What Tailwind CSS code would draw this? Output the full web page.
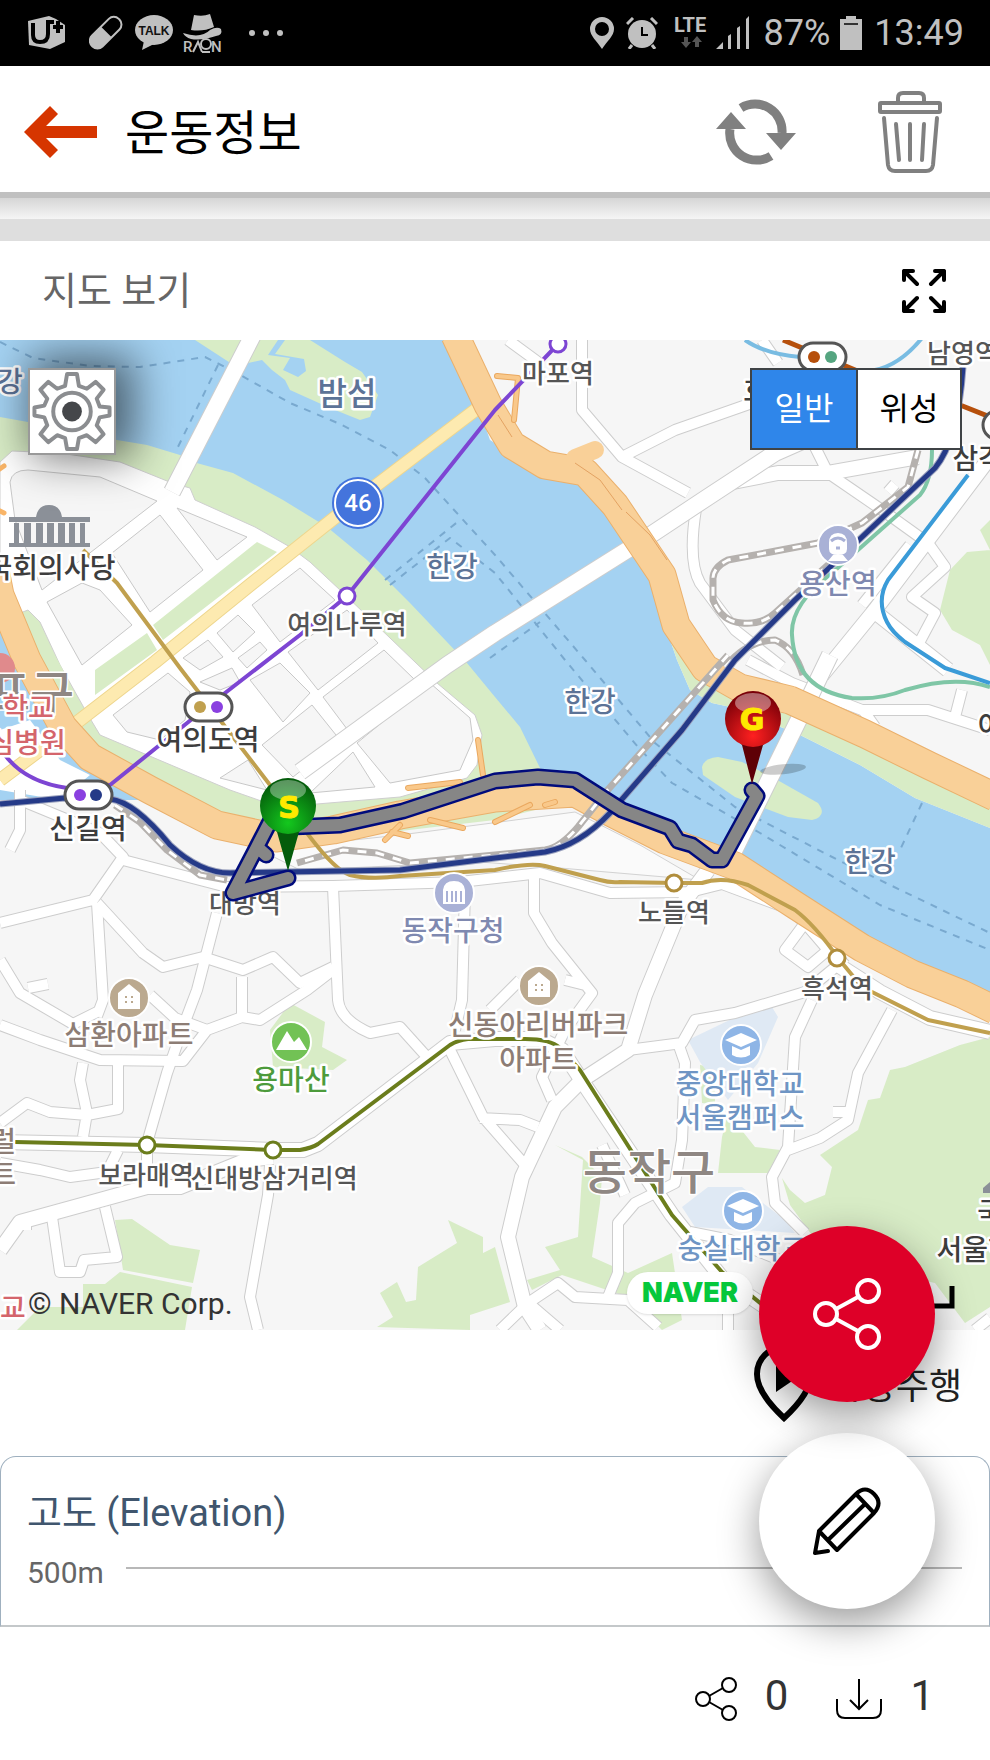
<!DOCTYPE html>
<html lang="ko">
<head>
    <meta charset="UTF-8">
    <meta name="viewport" content="width=device-width, initial-scale=1.0">
    <title>운동정보</title>
    <script src="https://cdn.jsdelivr.net/npm/@tailwindcss/browser@4"></script>
</head>
<body class="bg-white font-[family-name:Roboto,'Noto_Sans_CJK_KR',sans-serif]">
    <!-- Status bar -->
    <div class="flex items-center justify-between h-[66px] bg-black text-[#c0c0c0] pl-[27px] pr-[26px]">
        <div class="flex items-center">
            <svg class="w-10 h-9 mr-[22px]" viewBox="0 0 40 36" fill="none">
                <path d="M1 6 L22 1 L29 4 L38 10 V27 L23 34 L2 30 Z" fill="#c0c0c0"/>
                <path d="M6 8 V20 Q6 27 13 27 Q21 27 21 19 V7 H27 M26 12 H36 M31 6 V18" stroke="#000" stroke-width="4"/>
            </svg>
            <svg class="w-[34px] h-9 mr-3" viewBox="0 0 34 36">
                <g transform="rotate(45 17 18)">
                    <rect x="9" y="-1" width="15" height="38" rx="7" fill="none" stroke="#c0c0c0" stroke-width="2"/>
                    <path d="M9 17 H24 V30 a7 7 0 0 1 -15 0 Z" fill="#c0c0c0"/>
                </g>
            </svg>
            <svg class="w-[38px] h-9 mr-2.5" viewBox="0 0 38 36">
                <ellipse cx="19" cy="15" rx="19" ry="15" fill="#c0c0c0"/>
                <path d="M9 26 L7 35 L19 29 Z" fill="#c0c0c0"/>
                <text x="19" y="20" text-anchor="middle" class="text-[12px] font-bold font-[family-name:'Liberation_Sans',sans-serif]" fill="#111">TALK</text>
            </svg>
            <svg class="w-10 h-10 mr-[26px] overflow-visible" viewBox="0 0 40 40">
                <path d="M8 17 L11 2 Q20 4 27 1 L31 14 Q20 19 8 17 Z M0 20 Q18 26 27 17 Q34 13 38 16 Q40 22 33 23 Q18 28 8 26 Q2 24 0 20 Z" fill="#c0c0c0"/>
                <text x="0" y="39" class="text-[15px] font-medium" fill="#c0c0c0">R</text>
                <text x="28" y="39" class="text-[15px] font-medium" fill="#c0c0c0">N</text>
                <path d="M10 39 L15 29 L19 39" fill="none" stroke="#c0c0c0" stroke-width="2"/>
                <circle cx="23" cy="31" r="5" fill="#000" stroke="#c0c0c0" stroke-width="2"/>
                <path d="M19 39 H27" stroke="#c0c0c0" stroke-width="2"/>
            </svg>
            <svg class="w-[34px] h-2" viewBox="0 0 34 8" fill="#c0c0c0">
                <circle cx="3" cy="4" r="3"/><circle cx="17" cy="4" r="3"/><circle cx="31" cy="4" r="3"/>
            </svg>
        </div>
        <div class="flex items-center">
            <svg class="w-6 h-8 mr-3" viewBox="0 0 24 32"><path fill="#c0c0c0" fill-rule="evenodd" d="M12 0 A12 12 0 0 1 24 12 C24 19 17 24 12 32 C7 24 0 19 0 12 A12 12 0 0 1 12 0 Z M12 5 a7 7 0 1 0 0 14 a7 7 0 1 0 0 -14 Z"/></svg>
            <svg class="w-8 h-8 mr-4" viewBox="0 0 32 32">
                <circle cx="16" cy="17" r="14" fill="#c0c0c0"/>
                <path d="M1 7 L7 1 M25 1 L31 7 M6 28 L3 32 M26 28 L29 32" stroke="#c0c0c0" stroke-width="3"/>
                <path d="M16 10 V18 H22" fill="none" stroke="#000" stroke-width="2"/>
            </svg>
            <svg class="w-9 h-9 mr-1.5" viewBox="0 0 36 36">
                <text x="0" y="17" class="text-[20px] font-bold" fill="#c0c0c0">LTE</text>
                <path d="M10 22 h4 v5 h3 l-5 6 l-5 -6 h3 Z M21 32 h4 v-5 h3 l-5 -6 l-5 6 h3 Z" fill="#555"/>
            </svg>
            <svg class="w-[34px] h-[34px] mr-[14px]" viewBox="0 0 34 34" fill="#c0c0c0">
                <path d="M0 33 L7 26 V33 Z M12 20 L15 18 V33 H12 Z M21 12 L24 10 V33 H21 Z M30 3 L33 0 V33 H30 Z"/>
            </svg>
            <span class="text-[36px] leading-10 mr-2.5">87%</span>
            <svg class="w-[22px] h-[34px] mr-3" viewBox="0 0 22 34">
                <path d="M6 0 H16 V3 H22 V34 H0 V3 H6 Z" fill="#c0c0c0"/><path d="M4 8 H18" stroke="#333" stroke-width="2"/>
            </svg>
            <span class="text-[36px] leading-10">13:49</span>
        </div>
    </div>

    <!-- Title bar -->
    <header class="flex items-center h-[132px] bg-white border-b-6 border-[#c0c0c0] pt-1.5 pl-6 pr-12">
        <button aria-label="뒤로" class="w-[73px] h-[52px]">
            <svg class="w-[73px] h-[52px]" viewBox="0 0 73 52"><path d="M73 20 H22 L34 8 L26 0 L0 26 L26 52 L34 44 L22 32 H73 Z" fill="#d63500"/></svg>
        </button>
        <h1 class="grow ml-7 pt-1 text-[48px] leading-[60px] text-black">운동정보</h1>
        <button aria-label="새로고침" class="mr-[82px]">
            <svg class="w-20 h-[66px]" viewBox="0 0 80 66" fill="none">
                <path d="M25 9 A27 27 0 0 1 66 34 M55 57 A27 27 0 0 1 14 30" stroke="#808080" stroke-width="9"/>
                <path d="M50 34 H80 L65 51 Z M0 30 H30 L15 13 Z" fill="#808080"/>
            </svg>
        </button>
        <button aria-label="삭제">
            <svg class="w-16 h-[82px]" viewBox="0 0 64 82" fill="none" stroke="#808080" stroke-width="4" stroke-linecap="round">
                <path d="M20 10 V7 Q20 2 25 2 H41 Q46 2 46 7 V10"/>
                <rect x="2" y="12" width="60" height="9" rx="1"/>
                <path d="M6 27 L10 74 Q11 80 17 80 H48 Q54 80 55 74 L59 27 M18 33 L21 69 M32 33 V69 M46 33 L44 69"/>
            </svg>
        </button>
    </header>
    <div class="h-[21px] bg-linear-to-b from-[#d6d6d6] to-[#f5f5f5]"></div>
    <div class="h-[22px] bg-[#dedede]"></div>

    <main>
        <!-- Map heading -->
        <div class="flex items-center justify-between h-[99px] pl-[42px] pr-11">
            <h2 class="text-[38px] leading-10 text-[#666]">지도 보기</h2>
            <button aria-label="전체 화면">
                <svg class="w-11 h-11" viewBox="0 0 44 44" fill="none" stroke="#000" stroke-width="4" stroke-linecap="round" stroke-linejoin="round">
                    <path d="M2 11 V2 H11 M2 2 L15 15 M33 2 H42 V11 M42 2 L29 15 M2 33 V42 H11 M2 42 L15 29 M33 42 H42 V33 M42 42 L29 29"/>
                </svg>
            </button>
        </div>

        <!-- Map -->
        <div class="relative overflow-hidden">
            <svg class="block w-full h-auto font-[family-name:'Noto_Sans_CJK_KR',sans-serif]" viewBox="0 340 990 990" fill="none" stroke-linejoin="round">
                <defs>
                    <g id="roads">
                        <path d="M0 923 L93 900 L123 857 L100 833 L20 800 M20 790 V830 L10 850 M97 903 L103 1000 L97 1016"/>
                        <path d="M97 903 L143 953 L163 967 L203 957 L243 970 L273 957 L300 983 L333 967"/>
                        <path d="M123 860 L227 887 L333 886 L460 882 L540 873 L610 893 L690 892 L722 884 L792 910 L845 965"/>
                        <path d="M217 913 L197 990 L183 1027 L167 1073 L147 1143 V1180"/>
                        <path d="M333 887 L338 1000 Q340 1020 370 1033 L400 1027 L427 1057 M465 890 L462 1000 L455 1030"/>
                        <path d="M242 977 V1017 L207 1030 L183 1061 L100 1060 L40 1040 L0 1025 M242 1017 L260 1020 L307 990 L333 970"/>
                        <path d="M0 960 L20 993 L73 1024 L97 1012 M150 995 L175 1018 L207 1030 M28 988 L48 984"/>
                        <path d="M83 1063 L80 1080 L87 1113 L83 1137 M118 1063 V1109 L87 1115 L50 1112 L27 1103 L0 1123"/>
                        <path d="M0 1163 L40 1170 L70 1177 L107 1172 L118 1150"/>
                        <path d="M270 1165 L268 1195 L250 1297 L258 1330"/>
                        <path d="M105 1207 L117 1257 L84 1260 L80 1272 L60 1272 L52 1217 M26 1220 V1230"/>
                        <path d="M450 1050 L483 1117 L525 1165 M480 1118 L520 1120 L538 1127"/>
                        <path d="M534 875 V913 L552 943 L592 993 L565 1030 L542 1077 L552 1100 M490 1010 L520 980 M565 980 L585 985"/>
                        <path d="M628 1050 L682 1043 L695 1020 L735 1013 L805 992 L838 965"/>
                        <path d="M678 1043 L685 1063 L682 1140 L675 1183 L635 1203 L618 1223 V1273 L608 1297 M602 1145 L625 1195"/>
                        <path d="M812 1000 L795 1037 L788 1147 L772 1177 L775 1203 L805 1233 M892 1010 L858 1073 L848 1120 L820 1138 L788 1150 M833 1112 H850"/>
                        <path d="M805 923 L785 950 L808 967 L828 950 Z M690 1232 L730 1240 L780 1260"/>
                        <path d="M500 1330 L528 1303 L558 1283 L575 1297 L628 1300 L658 1327 M728 1330 V1305 M560 1330 L525 1300"/>
                        <path d="M748 660 L792 683 L862 710 L928 710 L990 730 M962 690 L955 717 M863 710 L875 727"/>
                        <path d="M582 340 V410 L622 457 L688 493 M622 457 L675 430 L752 403 L780 390"/>
                        <path d="M815 447 L828 473 L882 510 L928 543 L945 567 L912 597 L935 613 L918 645"/>
                        <path d="M697 503 Q687 560 700 583 L735 630 L782 667 M762 340 L778 363 M508 340 L538 362 M888 492 L895 484"/>
                        <path d="M910 545 L890 570 L862 605 M975 1330 L990 1318"/>
                    </g>
                    <g id="main-roads">
                        <path d="M0 1250 L20 1222 L100 1200 L147 1187 L180 1187 L247 1160 L273 1157"/>
                        <path d="M0 1142 L147 1145 L273 1150 H303 L318 1144 L450 1043 L495 1039 H540 L562 1050 L580 1078 L672 1215 L722 1278 L770 1310"/>
                        <path d="M708 870 L682 905 L645 995 L628 1050 L582 1080 L555 1107 L522 1177 L508 1237 L525 1307 L540 1330"/>
                        <path d="M988 460 L875 610 L822 675 M875 612 L948 670 M728 483 L778 473 H828 L918 457"/>
                        <path d="M838 965 L880 992 L930 1018 L990 1032"/>
                    </g>
                    <g id="rails">
                        <path d="M918 450 L908 487 L862 523 L818 543 L728 560 Q712 568 713 580 V600 Q722 622 742 623 Q762 625 775 613 L850 545"/>
                        <path d="M725 667 Q748 640 775 640 Q795 648 803 675 M728 655 L605 793 L578 827 Q560 848 545 850 L495 855 L410 863 L377 853 L343 850 L297 863"/>
                        <path d="M115 805 L140 822 L167 850 L200 875 L227 880"/>
                    </g>
                    <g id="highways">
                        <path d="M455 335 L488 405 L512 445 L545 465 L585 472 L615 505 L662 575 L676 625 L705 668 L740 688 L790 700 L865 734 L930 766 L995 797"/>
                        <path d="M-5 570 L0 595 L27 660 L63 727 L90 757 L150 790 L217 825 L277 838 L333 830 L400 815 L495 798 L575 793 L610 812 L665 840 L735 866 L795 905 L862 948 L912 974 L962 994 L995 1010"/>
                    </g>
                    <path id="ramps" d="M478 740 L483 775 M408 788 L460 782 M385 840 L400 825 M392 832 L408 836 M430 820 L463 828 M495 822 L530 805 M545 805 L555 802 M497 376 L518 378 L514 420"/>
                    <path id="bridges" d="M253 335 L172 492 M300 772 L447 665 L495 633 L640 542 L708 497 L775 453 L850 420 M830 655 L802 713 L733 853"/>
                    <path id="line1" d="M0 804 L65 798 L110 799 Q135 802 170 845 Q200 873 230 873 L400 870 L495 858 L545 852 Q580 845 610 813 L682 730 L735 660 L795 600 L862 537 L935 468 Q958 440 963 367"/>
                    <path id="route" d="M288 878 L233 893 L257 847 L266 855 L257 847 L275 812 L290 827 L340 825 L403 811 L495 781 L538 777 L575 780 L622 810 L670 828 L678 841 L692 845 L712 860 H722 L757 796 L752 790"/>
                    <radialGradient id="start" cx="50%" cy="80%" r="75%"><stop offset="0" stop-color="#14c81e"/><stop offset="1" stop-color="#045c0b"/></radialGradient>
                    <radialGradient id="goal" cx="50%" cy="80%" r="75%"><stop offset="0" stop-color="#ff2020"/><stop offset="1" stop-color="#7a0008"/></radialGradient>
                </defs>

                <!-- Land, parks and campuses -->
                <rect y="340" width="990" height="990" fill="#f6f6f6"/>
                <g fill="#d8ecc6">
                    <path d="M290 1003 L325 1022 L322 1047 L347 1060 L333 1070 L273 1067 L270 1030 Z"/>
                    <path d="M115 1220 L132 1219 L170 1245 L200 1250 L193 1283 L123 1270 Z M120 1272 L192 1287 L185 1330 H17 L40 1307 L83 1307 V1284 H105 Z"/>
                    <path d="M448 1220 L483 1237 V1253 L495 1247 L510 1302 L470 1315 V1330 L377 1327 L393 1317 L380 1293 L397 1282 L406 1302 L416 1300 L418 1267 L457 1243 Z"/>
                    <path d="M555 1145 L582 1157 L602 1177 L600 1203 L592 1257 L628 1273 L672 1253 L682 1320 L662 1330 L628 1297 L562 1275 L532 1290 L527 1280 L560 1270 L545 1247 L578 1237 L583 1160 Z"/>
                    <path d="M700 1065 L715 1068 V1105 L702 1103 Z M722 1137 L728 1113 L755 1147 L780 1150 L768 1173 L718 1173 Z"/>
                    <path d="M990 1037 L960 1045 L935 1055 L905 1067 L890 1070 L880 1098 L868 1100 L858 1130 L820 1155 L832 1167 L825 1195 L805 1203 L790 1190 L782 1178 L790 1205 L830 1260 L935 1283 L965 1323 L990 1307 Z"/>
                    <path d="M990 520 L980 530 L990 550 L967 552 L950 570 L940 610 L952 630 L980 645 L990 665 Z"/>
                </g>
                <path d="M688 1040 L740 1015 L772 1007 L778 1017 L758 1063 L728 1100 L700 1062 Z M682 1207 L708 1187 H742 L785 1220 L795 1233 L695 1227 Z" fill="#dfe9f4"/>

                <!-- River -->
                <path d="M0 340 H455 L490 440 L530 465 L575 480 L600 505 L635 550 L660 590 L665 625 L677 660 L690 690 L712 703 L735 708 L800 735 L860 765 L915 798 L990 828 V1005 L905 965 L788 900 L700 850 L575 800 L0 800 Z" fill="#a4d2f2"/>
                <path d="M658 580 L665 625 L677 660 L690 690 L712 703 L735 708 L800 735 L860 765 L915 798 L990 828 V800 L700 660 L675 600 Z" fill="#d8ecc6"/>
                <path d="M702 767 Q704 758 718 757 L742 762 L772 777 L818 803 Q828 816 812 820 L788 817 L735 797 L703 775 Z" fill="#d8ecc6"/>
                <path d="M195 340 H310 L345 362 L362 372 L378 395 L370 417 L360 420 L330 408 L290 390 L285 380 L272 370 L262 360 L235 366 Z" fill="#d8ecc6"/>
                <path d="M278 340 L268 355 L290 358 L283 370 L298 377 L306 371 L304 359 L275 354 L285 340 Z" fill="#a4d2f2"/>

                <!-- Yeouido -->
                <path d="M0 417 L28 422 L117 440 L147 445 L180 455 L193 462 L233 473 L283 500 L327 527 L367 560 L410 603 L447 642 L467 663 L495 697 L520 727 L540 768 L575 800 L495 820 L280 845 L150 800 L60 730 L0 600 Z" fill="#d8ecc6"/>
                <path d="M0 462 L12 451 L60 453 L120 462 L172 483 L190 488 L195 500 L255 527 L290 547 L310 562 L340 590 L415 662 L437 683 L475 715 L482 735 L477 765 L467 778 L400 797 L317 804 L267 803 L230 790 L100 735 L88 715 L60 665 L40 622 L28 610 L15 615 L0 560 Z" fill="#fff" stroke="#cfcfcf"/>
                <g fill="#f6f6f6" stroke="#c8c8c8">
                    <path d="M10 482 Q12 470 28 470 L100 477 L157 501 L42 590 L15 520 Z M177 508 L247 537 L217 560 Z M160 515 L203 570 L150 612 L112 553 Z"/>
                    <path d="M82 583 L100 590 L132 625 L82 665 L47 602 Z M300 568 L335 600 L280 642 L252 605 Z M238 615 L255 632 L233 652 L217 633 Z"/>
                    <path d="M208 640 L223 657 L200 670 L183 658 Z M260 642 L267 650 L247 668 L238 658 Z M347 610 L378 643 L318 690 L288 652 Z"/>
                    <path d="M384 650 L415 680 L350 733 L323 697 Z M312 705 L340 740 L293 777 L262 745 Z M220 778 L248 760 L267 790 Z"/>
                    <path d="M430 683 L470 718 L473 740 L460 770 L390 783 L357 743 Z M353 752 L375 787 L310 793 Z M168 673 L190 692 L185 720 L160 740 L127 732 L113 715 Z"/>
                    <path d="M280 663 L310 693 L283 722 L250 680 Z M200 682 L232 668 L240 682 L220 690 Z"/>
                </g>
                <path d="M257 542 L277 552 L163 640 L153 625 Z M95 670 L147 633 L157 650 L95 695 Z M20 620 L38 624 L63 670 L85 715 L70 700 L30 650 Z" fill="#d8ecc6"/>
                <path d="M0 730 L30 720 L60 760 L90 775 L60 800 L0 790 Z" fill="#fff"/>
                <path d="M500 822 L575 812 L640 845 L700 880 L560 868 L480 862 L300 870 L260 850 L400 835 Z" fill="#fafafa" stroke="#d2d2d2"/>

                <!-- Ferry routes -->
                <g stroke="#79a9cf" stroke-width="2" stroke-dasharray="7 7">
                    <path d="M0 342 L33 358 L90 366 L140 367 L205 357 L235 372 L290 403 L340 424 L390 450 L425 478 L495 555 L585 660 L655 743 L735 807 L838 860 L990 933"/>
                    <path d="M218 365 L175 453 M385 580 L460 520 M390 585 L450 538 L495 573 L565 660 L638 747 L672 783 L760 833 L880 905 L990 950"/>
                    <path d="M922 803 L900 850 M490 658 L540 622"/>
                </g>

                <!-- Roads -->
                <use href="#roads" stroke="#cdcdcd" stroke-width="12"/>
                <use href="#main-roads" stroke="#cdcdcd" stroke-width="16"/>
                <use href="#roads" stroke="#fff" stroke-width="10"/>
                <use href="#main-roads" stroke="#fff" stroke-width="14"/>
                <use href="#bridges" stroke="#cdcdcd" stroke-width="18"/>
                <use href="#bridges" stroke="#fff" stroke-width="16"/>
                <path d="M482 405 L357 500 L250 585 L155 662 L80 720 L0 780" stroke="#eed68e" stroke-width="14"/>
                <path d="M482 405 L357 500 L250 585 L155 662 L80 720 L0 780" stroke="#fdeab0" stroke-width="12"/>
                <use href="#highways" stroke="#eab06c" stroke-width="29"/>
                <use href="#highways" stroke="#f9d098" stroke-width="27"/>
                <path d="M575 458 L595 450" stroke="#f9d098" stroke-width="18" stroke-linecap="round"/>
                <path d="M-2 470 L4 466 M-2 510 L4 513" stroke="#f9b568" stroke-width="5" stroke-linecap="round"/>
                <use href="#ramps" stroke="#eaa85f" stroke-width="6" stroke-linecap="round"/>
                <use href="#ramps" stroke="#f9c88a" stroke-width="4" stroke-linecap="round"/>
                <path d="M498 415 L512 437 M575 463 L600 480 L622 510 M626 512 L650 535 L667 560" stroke="#e3a262" stroke-width="1"/>

                <!-- Railways and subway lines -->
                <use href="#rails" stroke="#b5b1ae" stroke-width="7"/>
                <use href="#rails" stroke="#fff" stroke-width="3" stroke-dasharray="9 9"/>
                <g stroke-width="4">
                    <path d="M932 450 Q932 480 920 495 L832 573 Q790 605 792 635 Q795 690 852 698 Q880 700 905 690 Q955 675 990 687" stroke="#7fc6a6"/>
                    <path d="M968 475 L888 580 Q876 600 887 622 Q892 632 905 642 L945 668 L990 683" stroke="#3a9bd8"/>
                    <path d="M745 340 Q765 354 800 357 M875 370 Q900 365 922 338" stroke="#79bce2"/>
                    <path d="M783 340 L860 372 M955 403 L990 417" stroke="#b6500c" stroke-width="5"/>
                    <path d="M560 342 L495 410 L347 596 L300 635 L207 707 L110 785 L67 788 Q25 782 5 755" stroke="#7d45d3"/>
                    <path d="M83 550 L117 583 L180 668 L310 837 Q335 870 350 875 Q370 880 400 876 L495 870 Q530 862 545 866 L600 880 Q610 883 620 882 L675 883 L702 883 Q722 876 748 885 L795 910 Q815 925 838 958 L862 987 L928 1020 L990 1033" stroke="#c0a04e"/>
                    <path d="M15 1142 L147 1145 L273 1150 H300 Q312 1148 318 1144 L450 1045 Q458 1040 468 1039 H525 Q550 1039 560 1048 L580 1070 L672 1215 L722 1272 L765 1307" stroke="#6b7d1c"/>
                </g>
                <use href="#line1" stroke="#9ba2be" stroke-width="7"/>
                <use href="#line1" stroke="#253a88" stroke-width="5"/>

                <!-- Stations -->
                <g fill="#fff" stroke-width="3">
                    <circle cx="558" cy="344" r="8" stroke="#7d45d3"/><circle cx="347" cy="596" r="8" stroke="#7d45d3"/>
                    <circle cx="674" cy="883" r="8" stroke="#b08d3c"/><circle cx="837" cy="958" r="8" stroke="#b08d3c"/>
                    <circle cx="147" cy="1145" r="8" stroke="#6b7d1c"/><circle cx="273" cy="1150" r="8" stroke="#6b7d1c"/>
                    <g stroke="#555">
                        <rect x="185" y="693" width="47" height="28" rx="14"/><rect x="65" y="781" width="47" height="28" rx="14"/>
                        <rect x="799" y="343" width="47" height="28" rx="14"/><rect x="983" y="411" width="47" height="28" rx="14"/>
                    </g>
                </g>
                <circle cx="200" cy="707" r="6" fill="#c0a04e"/><circle cx="217" cy="707" r="6" fill="#8a40e0"/>
                <circle cx="80" cy="795" r="6" fill="#8a40e0"/><circle cx="96" cy="795" r="6" fill="#253a88"/>
                <circle cx="814" cy="357" r="6" fill="#b6500c"/><circle cx="831" cy="357" r="6" fill="#55a580"/>

                <!-- Places -->
                <g stroke="#fff" stroke-width="2">
                    <circle cx="454" cy="893" r="20" fill="#a9b1d6"/><circle cx="838" cy="545" r="20" fill="#a9b1d6"/>
                    <circle cx="129" cy="998" r="20" fill="#bba98f"/><circle cx="539" cy="986" r="20" fill="#bba98f"/>
                    <circle cx="291" cy="1042" r="20" fill="#72c255"/>
                    <circle cx="741" cy="1045" r="20" fill="#8eb5e6"/><circle cx="743" cy="1211" r="20" fill="#8eb5e6"/>
                </g>
                <g fill="#fff">
                    <path d="M443 890 Q444 881 454 881 Q464 881 465 890 V904 H443 Z M118 993 L129 984 L140 993 V1009 H118 Z M528 981 L539 972 L550 981 V997 H528 Z"/>
                    <path d="M276 1050 L287 1031 L294 1042 L299 1037 L307 1050 Z"/>
                    <path d="M725 1040 L741 1033 L757 1040 L741 1047 Z M732 1046 L741 1050 L750 1046 V1055 Q741 1060 732 1055 Z"/>
                    <path d="M727 1206 L743 1199 L759 1206 L743 1213 Z M734 1212 L743 1216 L752 1212 V1221 Q743 1226 734 1221 Z"/>
                    <path d="M829 543 Q829 533 838 533 Q847 533 847 543 V549 Q847 555 838 555 Q829 555 829 549 Z M828 561 L833 555 H843 L848 561 Z"/>
                </g>
                <path d="M447 891 V902 M452 891 V902 M456 891 V902 M461 891 V902" stroke="#a9b1d6" stroke-width="2"/>
                <path d="M831 541 Q838 535 845 541 M836 548 H840" stroke="#a9b1d6" stroke-width="3"/>
                <path d="M126 996 v2 M132 996 v2 M126 1001 v2 M132 1001 v2 M536 984 v2 M542 984 v2 M536 989 v2 M542 989 v2" stroke="#bba98f" stroke-width="2"/>
                <g fill="#8b9098">
                    <path d="M36 517 Q38 505 49 505 Q60 505 62 517 Z M9 517 H90 V522 H9 Z M9 543 H90 V547 H9 Z"/>
                    <path d="M14 523 h5 v20 h-5 Z M24 523 h7 v20 h-7 Z M36 523 h7 v20 h-7 Z M47 523 h7 v20 h-7 Z M58 523 h7 v20 h-7 Z M69 523 h6 v20 h-6 Z M80 523 h5 v20 h-5 Z"/>
                    <path d="M983 1188 L990 1182 V1193 H983 Z"/>
                </g>
                <circle cx="0" cy="668" r="15" fill="#e08a8c"/>
                <circle cx="358" cy="503" r="26" fill="#4474dc"/><circle cx="358" cy="503" r="23" stroke="#fff" stroke-width="2"/>
                <text x="358" y="511" text-anchor="middle" fill="#fff" class="text-[24px] font-medium font-[family-name:Roboto,sans-serif]">46</text>

                <!-- Labels -->
                <g stroke="#fff" stroke-width="5" text-anchor="middle" class="[paint-order:stroke] text-[28px] font-medium">
                    <g fill="#8f8783" stroke-width="3" class="text-[48px]">
                        <text x="649" y="1189">동작구</text>
                        <text x="8" y="710">등포구</text>
                    </g>
                    <g fill="#5c7397">
                        <text x="347" y="405" class="text-[32px]">밤섬</text>
                        <text x="452" y="577">한강</text>
                        <text x="590" y="712">한강</text>
                        <text x="870" y="872">한강</text>
                        <text x="-3" y="392">한강</text>
                        <text x="838" y="594" fill="#7f89b0">용산역</text>
                        <text x="453" y="941" fill="#7f89b0">동작구청</text>
                        <text x="740" y="1094" fill="#6f95c4">중앙대학교</text>
                        <text x="740" y="1128" fill="#6f95c4">서울캠퍼스</text>
                        <text x="742" y="1259" fill="#6f95c4">숭실대학교</text>
                    </g>
                    <g fill="#3d3d3d">
                        <text x="51" y="578">국회의사당</text>
                        <text x="208" y="750">여의도역</text>
                        <text x="88" y="839">신길역</text>
                        <text x="1004" y="469">삼각지역</text>
                        <text x="769" y="401">효창</text>
                        <text x="1003" y="736">이촌</text>
                        <text x="1003" y="1223">국립</text>
                        <text x="1001" y="1260">서울현충원</text>
                    </g>
                    <g fill="#555" class="text-[26px]">
                        <text x="558" y="383">마포역</text>
                        <text x="347" y="634">여의나루역</text>
                        <text x="963" y="363">남영역</text>
                        <text x="245" y="913">대방역</text>
                        <text x="674" y="922">노들역</text>
                        <text x="837" y="998">흑석역</text>
                        <text x="146" y="1185">보라매역</text>
                        <text x="274" y="1188">신대방삼거리역</text>
                    </g>
                    <g fill="#8d7d75">
                        <text x="129" y="1045">삼환아파트</text>
                        <text x="538" y="1035">신동아리버파크</text>
                        <text x="538" y="1070">아파트</text>
                        <text x="3" y="1152">럴</text>
                        <text x="3" y="1185">트</text>
                    </g>
                    <text x="291" y="1090" fill="#4d9b3c">용마산</text>
                    <g fill="#d4656c">
                        <text x="28" y="718">학교</text>
                        <text x="27" y="753">심병원</text>
                        <text x="13" y="1318">교</text>
                    </g>
                </g>

                <!-- Recorded route -->
                <use href="#route" stroke="#000b7c" stroke-width="17" stroke-linecap="round"/>
                <use href="#route" stroke="#868686" stroke-width="12" stroke-linecap="round"/>

                <!-- Start and goal pins -->
                <ellipse cx="783" cy="769" rx="23" ry="5" fill="#000" fill-opacity=".2" transform="rotate(-6 785 769)"/>
                <path d="M264 818 L277 832 L288 871 L299 832 L312 818 Z" fill="#045c0b"/>
                <circle cx="288" cy="806" r="28" fill="url(#start)"/>
                <ellipse cx="288" cy="790" rx="18" ry="10" fill="#fff" fill-opacity=".35"/>
                <path d="M729 731 L742 745 L752 784 L763 745 L777 731 Z" fill="#5e0006"/>
                <circle cx="753" cy="719" r="28" fill="url(#goal)"/>
                <ellipse cx="753" cy="703" rx="18" ry="10" fill="#fff" fill-opacity=".4"/>
                <g fill="#ffe900" stroke="#ffe900" text-anchor="middle" class="text-[30px] font-bold font-[family-name:'DejaVu_Sans',sans-serif]">
                    <text x="289" y="818">S</text>
                    <text x="752" y="730">G</text>
                </g>
                <path d="M860 1286 V1306 H952 V1286" stroke="#000" stroke-width="5" stroke-linejoin="miter"/>
            </svg>

            <button aria-label="지도 설정" class="absolute left-7 top-7 w-[88px] h-[87px] bg-white border-2 border-[#999] shadow-[10px_-4px_44px_8px_rgba(0,0,0,0.55)]">
                <svg class="w-full h-full" viewBox="0 0 84 84" fill="none" stroke="#8b8d90" stroke-width="4" stroke-linejoin="round">
                    <path d="M37 4 H47 L49 16 L57 19 L66 12 L74 20 L67 29 L70 37 L80 38 V46 L70 48 L67 56 L74 65 L66 73 L57 66 L49 69 L47 80 H37 L35 69 L27 66 L18 73 L10 65 L17 56 L14 48 L4 46 V38 L14 36 L17 29 L10 20 L18 12 L27 19 L35 16 Z"/>
                    <circle cx="42" cy="42" r="19"/>
                    <circle cx="42" cy="42" r="10" fill="#45474a" stroke="none"/>
                </svg>
            </button>
            <div class="absolute right-7 top-7 flex h-[82px] border-2 border-[#3f4346] bg-white text-[32px] leading-10">
                <button class="w-[106px] bg-[#2f86ea] text-white border-r-2 border-[#3f4346]">일반</button>
                <button class="w-[102px] text-black">위성</button>
            </div>
            <p class="absolute left-7 bottom-2 text-[30px] leading-9 text-[#333]">© NAVER Corp.</p>
            <a href="#" class="absolute left-[627px] bottom-4 w-[126px] h-[42px] rounded-full bg-white shadow-sm text-center text-[27px] leading-[42px] font-black text-[#06c83c] font-[family-name:Inter,sans-serif]">NAVER</a>
        </div>

        <!-- Playback -->
        <div class="flex justify-end h-[126px] pt-[15px] pr-[28px]">
            <button class="flex items-center gap-4 h-[77px] text-[36px] leading-10 text-[#222]">
                <svg class="w-[60px] h-[77px]" viewBox="0 0 60 77" fill="none">
                    <path d="M30 73 Q3 48 3 29 A27 27 0 0 1 57 29 Q57 48 30 73 Z" stroke="#000" stroke-width="6"/>
                    <path d="M22 18 L44 32 L22 47 Z" fill="#000"/>
                </svg>
                <span class="pt-1.5">자동주행</span>
            </button>
        </div>

        <!-- Elevation -->
        <section class="h-[171px] border border-b-2 border-[#9fb0bf] border-b-[#c4c8ca] rounded-t-2xl pl-[26px] pr-[27px] pt-9">
            <h2 class="text-[38px] leading-10 text-[#40566e]">고도 (Elevation)</h2>
            <div class="flex items-start gap-[22px] mt-5">
                <span class="text-[30px] leading-10 text-[#666]">500m</span>
                <div class="grow h-0.5 mt-[14px] bg-[#b8b8b8]"></div>
            </div>
        </section>

        <!-- Counts -->
        <div class="flex items-center justify-end h-[133px] pr-14 pt-2.5 text-[42px] leading-[48px] text-[#333]">
            <svg class="w-[42px] h-11 mr-7" viewBox="0 0 42 44" fill="none" stroke="#000" stroke-width="2">
                <circle cx="8" cy="22" r="7"/><circle cx="34" cy="8" r="7"/><circle cx="34" cy="36" r="7"/><path d="M14 19 L28 11 M14 25 L28 33"/>
            </svg>
            <span class="mr-12 -mt-1.5">0</span>
            <svg class="w-[46px] h-[42px] mr-7" viewBox="0 0 46 42" fill="none" stroke="#000" stroke-width="2">
                <path d="M23 1 V31 M14 22 L23 31 L32 22 M1 21 V32 Q1 40 9 40 H37 Q45 40 45 32 V21"/>
            </svg>
            <span class="-mt-1.5">1</span>
        </div>
    </main>

    <!-- Floating actions -->
    <div class="fixed right-[55px] bottom-[151px] flex flex-col gap-[31px]">
        <button aria-label="공유" class="relative z-10 flex items-center justify-center size-44 rounded-full bg-[#de0028] shadow-[0_14px_40px_rgba(0,0,0,0.4)]">
            <svg class="w-[68px] h-[72px]" viewBox="0 0 68 72" fill="none" stroke="#fff" stroke-width="4">
                <circle cx="13" cy="36" r="11"/><circle cx="55" cy="13" r="11"/><circle cx="55" cy="59" r="11"/><path d="M23 31 L45 19 M23 41 L45 53"/>
            </svg>
        </button>
        <button aria-label="편집" class="flex items-center justify-center size-44 rounded-full bg-white shadow-[0_14px_40px_rgba(0,0,0,0.4)]">
            <svg class="w-[68px] h-[68px]" viewBox="0 0 68 68" fill="none" stroke="#000" stroke-width="4" stroke-linejoin="round" stroke-linecap="round">
                <path d="M6 44 L43 7 Q52 -2 61 7 Q70 16 61 26 L24 63 Z M6 44 L2 66 L15 64 M43 7 L61 26 M52 17 L15 53"/>
            </svg>
        </button>
    </div>
</body>
</html>
